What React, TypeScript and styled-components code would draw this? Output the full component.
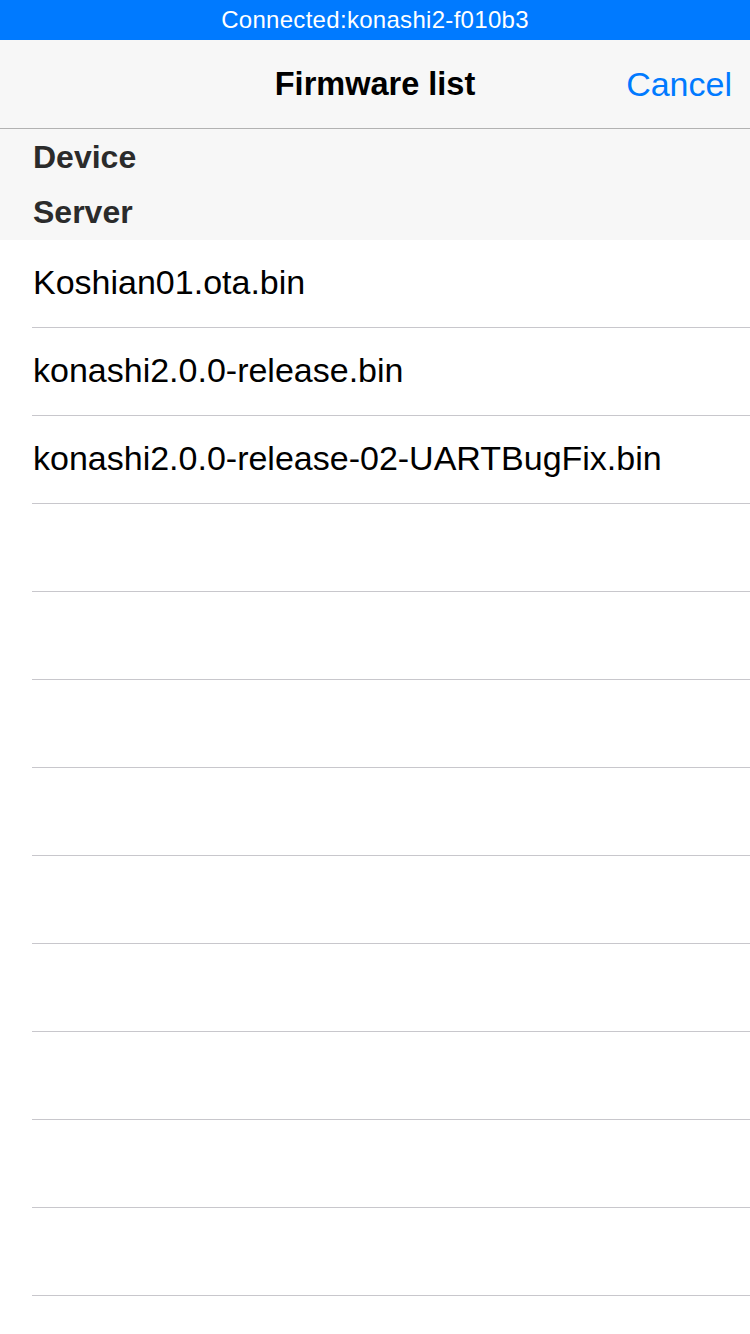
import React from "react";
import styled, { createGlobalStyle } from "styled-components";

const GlobalStyle = createGlobalStyle`
  html, body { margin: 0; padding: 0; background: #ffffff; }
  body { font-family: "Liberation Sans", Arial, sans-serif; -webkit-font-smoothing: antialiased; }
  * { box-sizing: border-box; }
`;

const Screen = styled.div`
  width: 750px;
  height: 1334px;
  overflow: hidden;
  display: flex;
  flex-direction: column;
  background: #ffffff;
  & > * { flex-shrink: 0; }
`;

const StatusBar = styled.div`
  height: 40px;
  background: #007aff;
  color: #ffffff;
  display: flex;
  align-items: center;
  justify-content: center;
  font-size: 24px;
  letter-spacing: 0.3px;
`;

const NavBar = styled.div`
  height: 89px;
  background: #f7f7f7;
  border-bottom: 1px solid #b2b2b2;
  display: grid;
  grid-template-columns: 1fr auto 1fr;
  align-items: center;
  padding: 0 18px;
`;

const NavTitle = styled.div`
  font-size: 32.5px;
  font-weight: bold;
  color: #000000;
  grid-column: 2;
`;

const NavButton = styled.div`
  grid-column: 3;
  justify-self: end;
  font-size: 34px;
  color: #007aff;
`;

const SectionHeader = styled.div<{ $h: number }>`
  height: ${(p) => p.$h}px;
  background: #f7f7f7;
  display: flex;
  align-items: center;
  padding-left: 33px;
  font-size: 32px;
  font-weight: bold;
  color: #2b2b2b;
`;

const List = styled.div`
  display: flex;
  flex-direction: column;
  padding-left: 32px;
`;

const Row = styled.div`
  height: 88px;
  border-bottom: 1px solid #c8c7cc;
  display: flex;
  align-items: center;
  padding-left: 1px;
  padding-bottom: 2px;
  font-size: 34px;
  color: #000000;
  flex-shrink: 0;
`;

const files = [
  "Koshian01.ota.bin",
  "konashi2.0.0-release.bin",
  "konashi2.0.0-release-02-UARTBugFix.bin",
];

export default function App() {
  const empty = Array.from({ length: 10 });
  return (
    <>
      <GlobalStyle />
      <Screen>
        <StatusBar>Connected:konashi2-f010b3</StatusBar>
        <NavBar>
          <NavTitle>Firmware list</NavTitle>
          <NavButton>Cancel</NavButton>
        </NavBar>
        <SectionHeader $h={56}>Device</SectionHeader>
        <SectionHeader $h={55}>Server</SectionHeader>
        <List>
          {files.map((f) => (
            <Row key={f}>{f}</Row>
          ))}
          {empty.map((_, i) => (
            <Row key={"e" + i} />
          ))}
        </List>
      </Screen>
    </>
  );
}
